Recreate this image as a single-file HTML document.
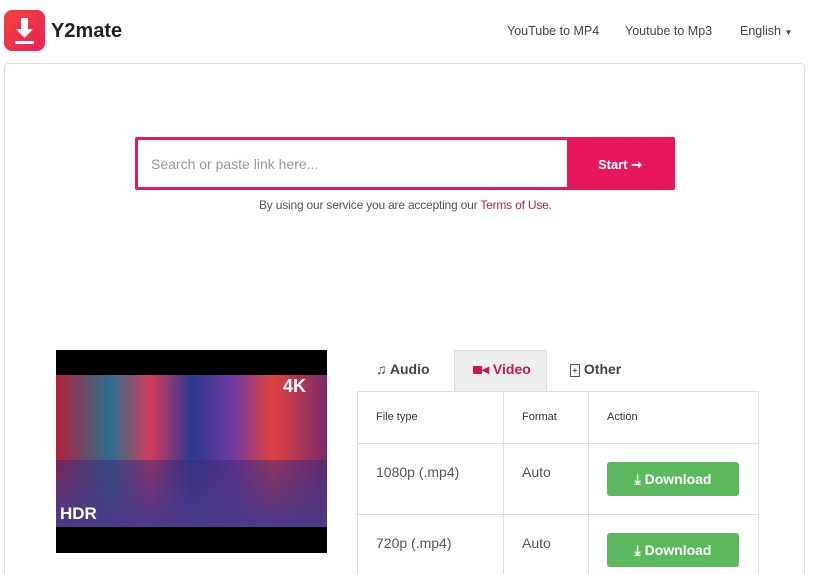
<!DOCTYPE html>
<html><head><style>
html,body{margin:0;width:813px;height:574px;overflow:hidden;background:#fff;font-family:"Liberation Sans",sans-serif;position:relative}
.a{position:absolute}
.nav{font-size:12.5px;color:#444;top:24px}
.cell{position:absolute;border-left:1px solid #ddd;border-top:1px solid #ddd}
.dl{position:absolute;left:607px;width:132px;height:34px;background:#5cb85c;border-radius:3px;color:#fff;font-weight:bold;font-size:14px;line-height:34px;text-align:center}
</style></head><body>
<div class="a" style="left:4px;top:10px;width:41px;height:41px;border-radius:8px;background:linear-gradient(135deg,#f4433a,#e9205a)">
<svg width="41" height="41" viewBox="0 0 41 41"><path d="M17 8h7v11h5l-8.5 9-8.5-9h5z" fill="#fff"/><rect x="11" y="31" width="19" height="3" fill="#fff"/></svg></div>
<div class="a" style="left:51px;top:20px;font-size:20px;font-weight:bold;color:#222">Y2mate</div>
<div class="a nav" style="left:507px">YouTube to MP4</div>
<div class="a nav" style="left:625px">Youtube to Mp3</div>
<div class="a nav" style="left:740px">English <span style="font-size:8px">▼</span></div>
<div class="a" style="left:4px;top:63px;width:799px;height:530px;border:1px solid #ddd;border-radius:4px"></div>
<div class="a" style="left:135px;top:137px;width:540px;height:53px;background:#e8175d;border-radius:2px"></div>
<div class="a" style="left:138px;top:140px;width:429px;height:47px;background:#fff"></div>
<div class="a" style="left:151px;top:156px;font-size:14px;color:#999">Search or paste link here...</div>
<div class="a" style="left:598px;top:157px;font-size:13px;font-weight:bold;color:#fff">Start ➞</div>
<div class="a" style="left:259px;top:198px;font-size:12px;color:#555;letter-spacing:-0.2px">By using our service you are accepting our <span style="color:#b0264f">Terms of Use</span>.</div>
<div class="a" style="left:56px;top:350px;width:271px;height:203px;background:#000"></div>
<div class="a" style="left:56px;top:375px;width:271px;height:152px;background:linear-gradient(90deg,#b3203a 0%,#2a6f8c 20%,#d43a5b 35%,#2b3a8f 50%,#6e3aa0 65%,#e0403f 80%,#7a2c6a 100%)"></div>
<div class="a" style="left:56px;top:460px;width:271px;height:67px;background:linear-gradient(180deg,rgba(60,40,120,.5),#4b3a8a)"></div>
<div class="a" style="left:60px;top:504px;font-size:17px;font-weight:bold;color:#fff">HDR</div>
<div class="a" style="left:283px;top:376px;font-size:18px;font-weight:bold;color:#fff">4K</div>
<div class="a" style="left:454px;top:350px;width:93px;height:41px;background:#eee;border:1px solid #ddd;border-bottom:none;box-sizing:border-box"></div>
<div class="a" style="left:376px;top:361px;font-size:14px;font-weight:bold;color:#444">♫ Audio</div>
<div class="a" style="left:473px;top:361px;font-size:14px;font-weight:bold;color:#c8174f"><span style="display:inline-block;width:9px;height:8px;background:#c8174f;border-radius:1px"></span>◂ Video</div>
<div class="a" style="left:570px;top:361px;font-size:14px;font-weight:bold;color:#444"><span style="display:inline-block;width:8px;height:11px;border:1px solid #555;font-size:8px;line-height:11px;text-align:center;vertical-align:1px">+</span> Other</div>
<div class="a" style="left:357px;top:391px;width:401px;height:190px;border-right:1px solid #ddd"></div>
<div class="cell" style="left:357px;top:391px;width:146px;height:52px"></div>
<div class="cell" style="left:503px;top:391px;width:85px;height:52px"></div>
<div class="cell" style="left:588px;top:391px;width:170px;height:52px"></div>
<div class="cell" style="left:357px;top:443px;width:146px;height:71px"></div>
<div class="cell" style="left:503px;top:443px;width:85px;height:71px"></div>
<div class="cell" style="left:588px;top:443px;width:170px;height:71px"></div>
<div class="cell" style="left:357px;top:514px;width:146px;height:71px"></div>
<div class="cell" style="left:503px;top:514px;width:85px;height:71px"></div>
<div class="cell" style="left:588px;top:514px;width:170px;height:71px"></div>
<div class="a" style="left:376px;top:411px;font-size:11px;color:#333">File type</div>
<div class="a" style="left:522px;top:411px;font-size:11px;color:#333">Format</div>
<div class="a" style="left:607px;top:411px;font-size:11px;color:#333">Action</div>
<div class="a" style="left:376px;top:464px;font-size:14px;color:#555">1080p (.mp4)</div>
<div class="a" style="left:522px;top:464px;font-size:14px;color:#555">Auto</div>
<div class="a" style="left:376px;top:535px;font-size:14px;color:#555">720p (.mp4)</div>
<div class="a" style="left:522px;top:535px;font-size:14px;color:#555">Auto</div>
<div class="dl" style="top:462px">⤓ Download</div>
<div class="dl" style="top:533px">⤓ Download</div>
</body></html>
